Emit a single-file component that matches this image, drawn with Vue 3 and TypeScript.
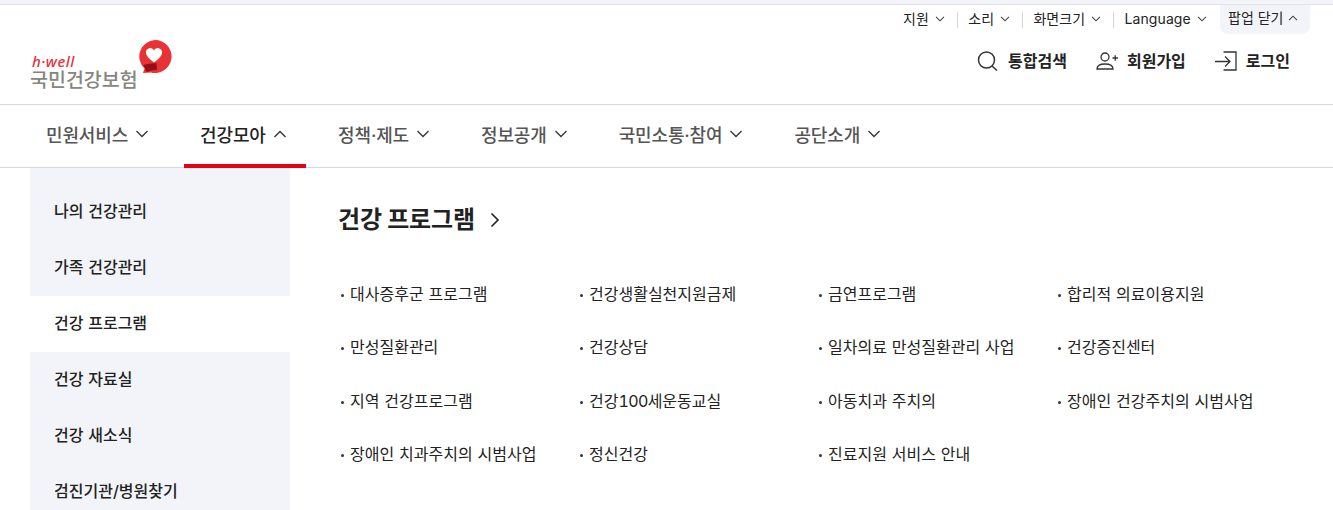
<script setup lang="ts">
const utils = ['지원', '소리', '화면크기', 'Language']
const navs = [
  { label: '민원서비스', active: false },
  { label: '건강모아', active: true },
  { label: '정책·제도', active: false },
  { label: '정보공개', active: false },
  { label: '국민소통·참여', active: false },
  { label: '공단소개', active: false },
]
const side = ['나의 건강관리', '가족 건강관리', '건강 프로그램', '건강 자료실', '건강 새소식', '검진기관/병원찾기']
const links = [
  '대사증후군 프로그램', '건강생활실천지원금제', '금연프로그램', '합리적 의료이용지원',
  '만성질환관리', '건강상담', '일차의료 만성질환관리 사업', '건강증진센터',
  '지역 건강프로그램', '건강100세운동교실', '아동치과 주치의', '장애인 건강주치의 시범사업',
  '장애인 치과주치의 시범사업', '정신건강', '진료지원 서비스 안내',
]
const parts = (label: string): string[] => label.split(/(\d+)/)
const isNumber = (part: string): boolean => /^\d+$/.test(part)
</script>

<template>
  <div class="page">
    <div class="strip"></div>
    <header class="head">
      <div class="utils">
        <a v-for="u in utils" :key="u" class="util">
          {{ u }}
          <svg width="10" height="6" viewBox="0 0 10 6"><path d="M1 .8l4 4 4-4" fill="none" stroke="#444" stroke-width="1.100" /></svg>
        </a>
        <a class="popup">
          팝업 닫기
          <svg width="10" height="6" viewBox="0 0 10 6"><path d="M1 5.200l4-4 4 4" fill="none" stroke="#444" stroke-width="1.100" /></svg>
        </a>
      </div>
      <div class="brand-row">
        <div class="logo">
          <span class="hwell">h·well</span>
          <span class="logo-name">국민건강보험</span>
          <svg class="mark" width="34" height="34" viewBox="0 0 34 34">
            <path d="M17 0a16.500 16.500 0 1 1-4 32.500L5 33l1.500-4.500A16.500 16.500 0 0 1 17 0z" fill="#e83234" />
            <path d="M16 10.500c-1.300-1.900-3-2.700-4.800-2.300-2.300.5-3.700 2.500-3.200 5 .5 2.900 3.400 6 8 9.300 4.600-3.300 7.500-6.400 8-9.300.5-2.500-.9-4.500-3.200-5-1.800-.4-3.500.4-4.800 2.300z" fill="#fff" />
            <path d="M5.500 25q5.500-2 13-1.700l.5 6.500q-6 .2-10.500 2.200z" fill="#960e18" />
          </svg>
        </div>
        <div class="actions">
          <a class="action search">
            <svg width="21" height="20" viewBox="0 0 21 20" fill="none" stroke="#333" stroke-width="1.500"><circle cx="9.500" cy="9" r="8" /><path d="M15 15l5 4.500" /></svg>
            통합검색
          </a>
          <a class="action">
            <svg width="23" height="18" viewBox="-1 0 23 18" fill="none" stroke="#333" stroke-width="1.300"><circle cx="9" cy="5" r="4" /><path d="M1 17c0-3.300 3.300-5 8-5s8 1.700 8 5z" /><path d="M16.500 6h5.500M19.200 3.300v5.400" /></svg>
            회원가입
          </a>
          <a class="action login">
            <svg width="22" height="20" viewBox="0 0 22 20" fill="none" stroke="#333" stroke-width="1.300"><path d="M0 10.500h15M10 5.500l5 5-5 5" /><path d="M8.500 1h12.500v18H8.500" /></svg>
            로그인
          </a>
        </div>
      </div>
    </header>
    <nav class="nav">
      <a v-for="n in navs" :key="n.label" class="nav-item" :class="{ active: n.active }">
        {{ n.label }}
        <svg width="14" height="8" viewBox="0 0 14 8"><path :d="n.active ? 'M1.500 7L7 1.500 12.500 7' : 'M1.500 1L7 6.500 12.500 1'" fill="none" stroke="#333" stroke-width="1.300" /></svg>
      </a>
    </nav>
    <div class="body">
      <aside class="side">
        <a v-for="s in side" :key="s" class="side-item" :class="{ current: s === '건강 프로그램' }">{{ s }}</a>
      </aside>
      <main class="content">
        <h2 class="title">
          건강 프로그램
          <svg width="10" height="16" viewBox="0 0 10 16"><path d="M1.500 1.500L8 8l-6.500 6.500" fill="none" stroke="#222" stroke-width="1.600" /></svg>
        </h2>
        <ul class="links">
          <li v-for="l in links" :key="l"><template v-for="(p, i) in parts(l)" :key="i"><span v-if="isNumber(p)" class="num">{{ p }}</span><template v-else>{{ p }}</template></template></li>
        </ul>
      </main>
    </div>
  </div>
</template>

<style>
html, body { margin: 0; background: #fff; overflow: hidden; }
</style>

<style scoped>
.page {
  width: 1333px;
  height: 510px;
  overflow: hidden;
  font-family: Inter, "Noto Sans CJK KR", sans-serif;
  color: #222;
}
.strip {
  height: 4px;
  background: #f3f4f9;
  border-bottom: 1px solid #e3e4ea;
}
.head {
  height: 99px;
  border-bottom: 1px solid #d9d9dc;
  padding: 0 23px 0 30px;
}
.utils {
  display: flex;
  justify-content: flex-end;
  align-items: flex-start;
  height: 29px;
  font-size: 14px;
  line-height: 20px;
}
.util {
  display: flex;
  align-items: center;
  gap: 6px;
  padding: 4px 0 0;
  margin-right: 13.200px;
  height: 20px;
  letter-spacing: .1px;
}
.util + .util::before {
  content: "";
  width: 1px;
  height: 16px;
  background: #d5d5d8;
  margin: 2px 4px 0 -1px;
}
.popup {
  display: flex;
  align-items: center;
  gap: 5px;
  height: 29px;
  width: 90px;
  box-sizing: border-box;
  padding: 0 0 3px 8px;
  margin: 0;
  background: #f3f4f9;
  border-radius: 0 0 8px 8px;
}
.brand-row {
  display: flex;
  justify-content: space-between;
  align-items: flex-start;
}
.logo {
  position: relative;
  width: 142px;
  height: 60px;
}
.hwell {
  position: absolute;
  left: 2px;
  top: 21px;
  font-size: 15px;
  line-height: 13px;
  font-weight: 500;
  font-style: italic;
  letter-spacing: .5px;
  color: #e8303a;
  font-family: "Noto Sans", sans-serif;
}
.logo-name {
  position: absolute;
  left: 0;
  top: 34px;
  font-size: 19.500px;
  line-height: 24px;
  font-weight: 500;
  color: #85867e;
  white-space: nowrap;
}
.mark {
  position: absolute;
  left: 108px;
  top: 6px;
}
.actions {
  display: flex;
  gap: 28px;
  padding: 15px 20px 0 0;
}
.action {
  display: flex;
  align-items: center;
  gap: 9px;
  font-size: 16px;
  font-weight: 700;
  line-height: 24px;
  color: #222;
}
.action.search { gap: 10px; }
.action.login { margin-left: 1px; }
.nav {
  display: flex;
  gap: 16px;
  padding: 0 30px;
  height: 62px;
  border-bottom: 1px solid #d9d9dc;
}
.nav-item {
  display: flex;
  align-items: center;
  gap: 7px;
  padding: 0 19px 5px 16px;
  font-size: 18px;
  font-weight: 500;
  letter-spacing: -.15px;
  color: #555;
  box-sizing: border-box;
  height: 63px;
  white-space: nowrap;
}
.nav-item.active {
  color: #222;
  border-bottom: 4px solid #e60012;
  padding-bottom: 1px;
  width: 122px;
}
.body {
  display: flex;
  padding-left: 30px;
}
.side {
  width: 260px;
  flex: none;
  padding-top: 16px;
  background: #f3f4f9;
}
.side-item {
  display: flex;
  align-items: center;
  height: 56px;
  box-sizing: border-box;
  padding: 0 0 4px 24px;
  font-size: 16px;
  font-weight: 500;
  color: #222;
  word-spacing: .5px;
}
.side-item.current { background: #fff; }
.content {
  padding: 34px 0 0 48px;
  flex: 1;
}
.title {
  display: flex;
  align-items: center;
  gap: 15.500px;
  margin: 0;
  font-size: 24px;
  font-weight: 700;
  line-height: 36px;
  color: #222;
  letter-spacing: -.2px;
}
.links {
  list-style: none;
  margin: 0;
  padding: 44px 0 0;
  display: grid;
  grid-template-columns: repeat(4, 239px);
  row-gap: 29.330px;
  font-size: 16px;
  line-height: 24px;
  color: #222;
  word-spacing: .4px;
}
.num {
  font-variant-numeric: tabular-nums;
  letter-spacing: -.65px;
}
.links li {
  position: relative;
  padding-left: 12px;
  white-space: nowrap;
}
.links li::before {
  content: "";
  position: absolute;
  left: 3px;
  top: 12px;
  width: 3px;
  height: 3px;
  background: #333;
  border-radius: 50%;
}
</style>
